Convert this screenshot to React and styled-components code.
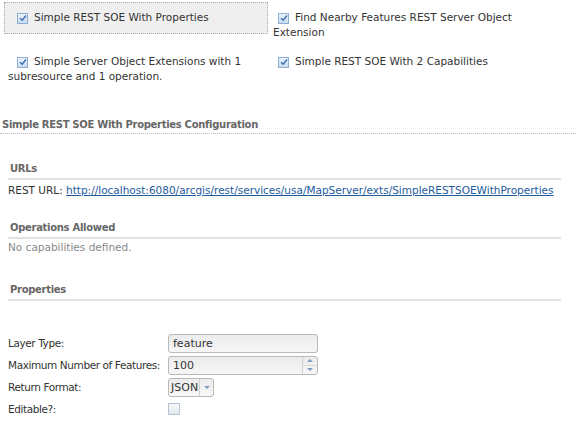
import React from 'react';
import styled, { createGlobalStyle } from 'styled-components';

const GlobalStyle = createGlobalStyle`
  body {
    margin: 0;
    background: #fff;
    font-family: "DejaVu Sans", Verdana, sans-serif;
    font-size: 10.5px;
    color: #444;
  }
`;

const soes = [
  { name: 'Simple REST SOE With Properties', selected: true, indent: 9 },
  { name: 'Find Nearby Features REST Server Object Extension', indent: 5 },
  { name: 'Simple Server Object Extensions with 1 subresource and 1 operation.', indent: 9 },
  { name: 'Simple REST SOE With 2 Capabilities', indent: 5 },
];

const Check = ({ checked, indent }) => (
  <CheckBox indent={indent}>
    {checked && (
      <svg width="8" height="8" viewBox="0 0 8 8">
        <path d="M1 4.2 L3.2 6.3 L7 1.5" fill="none" stroke="#3d6fb0" strokeWidth="1.4" />
      </svg>
    )}
  </CheckBox>
);

const App = () => {
  return (
    <>
      <GlobalStyle />
      <Page>
        <SoeGrid>
          {soes.map((s) => (
            <SoeItem key={s.name} selected={s.selected}>
              <Check checked indent={s.indent} />
              {s.name}
            </SoeItem>
          ))}
        </SoeGrid>

        <ConfigTitle>Simple REST SOE With Properties Configuration</ConfigTitle>

        <Section top={29}>
          <SectionTitle>URLs</SectionTitle>
          <Row>
            REST URL:&nbsp;
            <UrlLink href="#">http://localhost:6080/arcgis/rest/services/usa/MapServer/exts/SimpleRESTSOEWithProperties</UrlLink>
          </Row>
        </Section>

        <Section top={25}>
          <SectionTitle>Operations Allowed</SectionTitle>
          <Muted>No capabilities defined.</Muted>
        </Section>

        <Section top={30}>
          <SectionTitle>Properties</SectionTitle>
        </Section>

        <PropForm>
          <Label>Layer Type:</Label>
          <TextField>feature</TextField>
          <Label>Maximum Number of Features:</Label>
          <TextField>
            100
            <Spinner>
              <SpinBtn><Arrow up /></SpinBtn>
              <SpinBtn><Arrow /></SpinBtn>
            </Spinner>
          </TextField>
          <Label>Return Format:</Label>
          <SelectBox>
            JSON
            <SelectBtn><Arrow /></SelectBtn>
          </SelectBox>
          <Label>Editable?:</Label>
          <div><PlainCheck /></div>
        </PropForm>
      </Page>
    </>
  );
};

const Page = styled.div`
  width: 576px;
  height: 423px;
  overflow: hidden;
`;

const SoeGrid = styled.div`
  display: grid;
  grid-template-columns: 264px 1fr;
  column-gap: 1px;
  align-items: start;
  padding: 2px 0 0 4px;
  width: 530px;
`;

const SoeItem = styled.div`
  padding: 7px 3px ${(p) => (p.selected ? 8 : 5)}px 3px;
  line-height: 15px;
  color: #333;
  border: 1px dotted ${(p) => (p.selected ? '#aaa' : 'transparent')};
  background: ${(p) => (p.selected ? '#efefef' : 'transparent')};
`;

const CheckBox = styled.span`
  display: inline-flex;
  align-items: center;
  justify-content: center;
  width: 9px;
  height: 9px;
  margin: 0 6px 0 ${(p) => p.indent}px;
  vertical-align: -1px;
  border: 1px solid #8eaed3;
  background: linear-gradient(#eaf2fb, #c8dcf2);
`;

const PlainCheck = styled.span`
  display: block;
  width: 10px;
  height: 10px;
  border: 1px solid #b5c4d6;
  background: linear-gradient(#f8f8f8, #e3e9f1);
`;

const ConfigTitle = styled.div`
  margin-top: 28px;
  padding: 0 0 1px 2px;
  font-weight: bold;
  font-size: 10px;
  letter-spacing: -0.3px;
  line-height: 14px;
  color: #666;
  border-bottom: 1px dotted #bbb;
`;

const Section = styled.div`
  margin: ${(p) => p.top}px 15px 0 8px;
`;

const SectionTitle = styled.div`
  padding: 0 0 3px 2px;
  font-weight: bold;
  font-size: 10px;
  letter-spacing: -0.3px;
  line-height: 12px;
  color: #666;
  border-bottom: 2px solid #e2e2e2;
`;

const Row = styled.div`
  padding-top: 3px;
  line-height: 14px;
  color: #333;
`;

const UrlLink = styled.a`
  color: #1d5b9e;
  text-decoration: underline;
`;

const Muted = styled.div`
  padding-top: 1px;
  line-height: 14px;
  color: #888;
`;

const PropForm = styled.div`
  display: grid;
  grid-template-columns: 160px auto;
  grid-auto-rows: 22px;
  align-items: center;
  justify-items: start;
  margin: 31px 0 0 8px;
  color: #333;
`;

const Label = styled.div`
  line-height: 14px;
  white-space: nowrap;
  letter-spacing: -0.4px;
`;

const TextField = styled.div`
  position: relative;
  box-sizing: border-box;
  width: 150px;
  height: 19px;
  padding: 0 4px;
  line-height: 17px;
  font-size: 11px;
  border: 1px solid #b9b9b9;
  border-radius: 3px;
  background: linear-gradient(#ececec, #f6f6f6);
  color: #333;
`;

const Spinner = styled.div`
  position: absolute;
  top: 0;
  right: 0;
  bottom: 0;
  width: 14px;
  display: flex;
  flex-direction: column;
  border-left: 1px solid #d0d0d0;
`;

const SpinBtn = styled.div`
  flex: 1;
  display: flex;
  align-items: center;
  justify-content: center;
  & + & {
    border-top: 1px solid #d8d8d8;
  }
`;

const Arrow = styled.span`
  width: 0;
  height: 0;
  border-left: 3px solid transparent;
  border-right: 3px solid transparent;
  ${(p) => (p.up ? 'border-bottom: 3px solid #7c9cc4;' : 'border-top: 3px solid #7c9cc4;')}
`;

const SelectBox = styled.div`
  box-sizing: border-box;
  display: flex;
  align-items: center;
  width: 46px;
  height: 19px;
  padding-left: 2px;
  font-size: 11px;
  border: 1px solid #b9b9b9;
  border-radius: 3px;
  background: linear-gradient(#ececec, #f8f8f8);
  color: #333;
`;

const SelectBtn = styled.div`
  margin-left: auto;
  align-self: stretch;
  width: 13px;
  display: flex;
  align-items: center;
  justify-content: center;
  border-left: 1px solid #d0d0d0;
`;

export default App;
